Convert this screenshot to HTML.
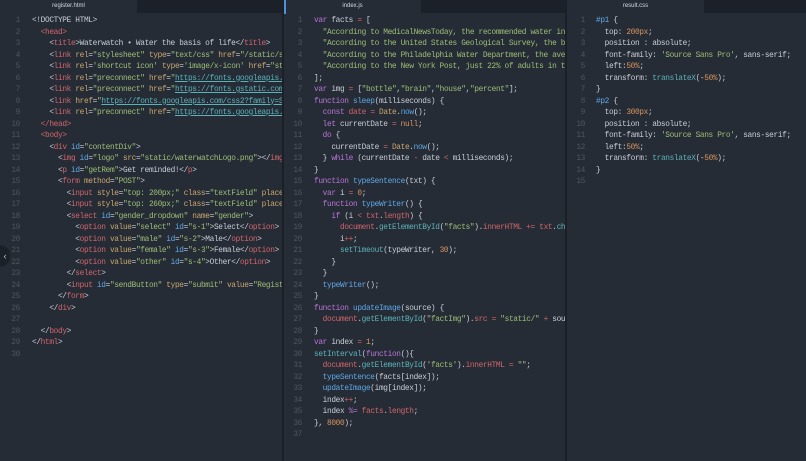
<!DOCTYPE html>
<html><head><style>
html,body{margin:0;padding:0;width:806px;height:461px;overflow:hidden;background:#262c36;}
.pane{position:absolute;top:0;height:461px;background:#262c36;overflow:hidden;}
.tabbar{position:absolute;top:0;left:0;right:0;height:13px;background:#1c2129;}
.tab{position:absolute;top:0;left:0;height:13px;width:137px;background:#262c36;color:#d5d9e0;font:6px "Liberation Sans",sans-serif;text-align:center;line-height:13px;}
.code{position:absolute;top:16px;left:0;right:0;font-family:"Liberation Mono",monospace;font-size:7.8px;letter-spacing:-0.35px;color:#c8cdd5;white-space:normal;}
.ln{display:block;height:11.5px;line-height:11.5px;position:relative;}
.n{position:absolute;left:0;width:21px;text-align:right;color:#4e5561;white-space:pre;}
.t{position:absolute;white-space:pre;}
.r{color:#d0656a}.a{color:#c9a66b}.s{color:#9cbe76}.k{color:#b775d6}.f{color:#5ea8e6}.o{color:#d7955e}.b{color:#5ea8e6}.c{color:#5bb3b9}.u{color:#5bb3b9;text-decoration:underline}
.sep{position:absolute;top:0;width:2px;height:461px;background:#1b2027;}
</style></head><body>

<div class="pane" style="left:0;width:283px">
<div class="tabbar"><div class="tab">register.html</div></div>
<div class="code">
<div class="ln"><span class="n" style="width:20px">1</span><span class="t" style="left:32px">&lt;!DOCTYPE HTML&gt;</span></div>
<div class="ln"><span class="n" style="width:20px">2</span><span class="t" style="left:32px">  <span class="r">&lt;head&gt;</span></span></div>
<div class="ln"><span class="n" style="width:20px">3</span><span class="t" style="left:32px">    &lt;<span class="r">title</span>&gt;Waterwatch • Water the basis of life&lt;/<span class="r">title</span>&gt;</span></div>
<div class="ln"><span class="n" style="width:20px">4</span><span class="t" style="left:32px">    &lt;<span class="r">link</span> <span class="a">rel</span>=<span class="s">"stylesheet"</span> <span class="a">type</span>=<span class="s">"text/css"</span> <span class="a">href</span>=<span class="s">"/static/st</span></span></div>
<div class="ln"><span class="n" style="width:20px">5</span><span class="t" style="left:32px">    &lt;<span class="r">link</span> <span class="a">rel</span>=<span class="s">'shortcut icon'</span> <span class="a">type</span>=<span class="s">'image/x-icon'</span> <span class="a">href</span>=<span class="s">"sta</span></span></div>
<div class="ln"><span class="n" style="width:20px">6</span><span class="t" style="left:32px">    &lt;<span class="r">link</span> <span class="a">rel</span>=<span class="s">"preconnect"</span> <span class="a">href</span>=<span class="s">"<span class="u">https://fonts.googleapis.c</span></span></span></div>
<div class="ln"><span class="n" style="width:20px">7</span><span class="t" style="left:32px">    &lt;<span class="r">link</span> <span class="a">rel</span>=<span class="s">"preconnect"</span> <span class="a">href</span>=<span class="s">"<span class="u">https://fonts.gstatic.com</span>"</span></span></div>
<div class="ln"><span class="n" style="width:20px">8</span><span class="t" style="left:32px">    &lt;<span class="r">link</span> <span class="a">href</span>=<span class="s">"<span class="u">https://fonts.googleapis.com/css2?family=So</span></span></span></div>
<div class="ln"><span class="n" style="width:20px">9</span><span class="t" style="left:32px">    &lt;<span class="r">link</span> <span class="a">rel</span>=<span class="s">"preconnect"</span> <span class="a">href</span>=<span class="s">"<span class="u">https://fonts.googleapis.c</span></span></span></div>
<div class="ln"><span class="n" style="width:20px">10</span><span class="t" style="left:32px">  <span class="r">&lt;/head&gt;</span></span></div>
<div class="ln"><span class="n" style="width:20px">11</span><span class="t" style="left:32px">  <span class="r">&lt;body&gt;</span></span></div>
<div class="ln"><span class="n" style="width:20px">12</span><span class="t" style="left:32px">    &lt;<span class="r">div</span> <span class="b">id</span>=<span class="s">"contentDiv"</span>&gt;</span></div>
<div class="ln"><span class="n" style="width:20px">13</span><span class="t" style="left:32px">      &lt;<span class="r">img</span> <span class="b">id</span>=<span class="s">"logo"</span> <span class="a">src</span>=<span class="s">"static/waterwatchLogo.png"</span>&gt;&lt;/<span class="r">img</span>&gt;</span></div>
<div class="ln"><span class="n" style="width:20px">14</span><span class="t" style="left:32px">      &lt;<span class="r">p</span> <span class="b">id</span>=<span class="s">"getRem"</span>&gt;Get reminded!&lt;/<span class="r">p</span>&gt;</span></div>
<div class="ln"><span class="n" style="width:20px">15</span><span class="t" style="left:32px">      &lt;<span class="r">form</span> <span class="a">method</span>=<span class="s">"POST"</span>&gt;</span></div>
<div class="ln"><span class="n" style="width:20px">16</span><span class="t" style="left:32px">        &lt;<span class="r">input</span> <span class="a">style</span>=<span class="s">"top: 200px;"</span> <span class="a">class</span>=<span class="s">"textField"</span> <span class="a">placeH</span></span></div>
<div class="ln"><span class="n" style="width:20px">17</span><span class="t" style="left:32px">        &lt;<span class="r">input</span> <span class="a">style</span>=<span class="s">"top: 260px;"</span> <span class="a">class</span>=<span class="s">"textField"</span> <span class="a">placeH</span></span></div>
<div class="ln"><span class="n" style="width:20px">18</span><span class="t" style="left:32px">        &lt;<span class="r">select</span> <span class="b">id</span>=<span class="s">"gender_dropdown"</span> <span class="a">name</span>=<span class="s">"gender"</span>&gt;</span></div>
<div class="ln"><span class="n" style="width:20px">19</span><span class="t" style="left:32px">          &lt;<span class="r">option</span> <span class="a">value</span>=<span class="s">"select"</span> <span class="b">id</span>=<span class="s">"s-1"</span>&gt;Select&lt;/<span class="r">option</span>&gt;</span></div>
<div class="ln"><span class="n" style="width:20px">20</span><span class="t" style="left:32px">          &lt;<span class="r">option</span> <span class="a">value</span>=<span class="s">"male"</span> <span class="b">id</span>=<span class="s">"s-2"</span>&gt;Male&lt;/<span class="r">option</span>&gt;</span></div>
<div class="ln"><span class="n" style="width:20px">21</span><span class="t" style="left:32px">          &lt;<span class="r">option</span> <span class="a">value</span>=<span class="s">"female"</span> <span class="b">id</span>=<span class="s">"s-3"</span>&gt;Female&lt;/<span class="r">option</span>&gt;</span></div>
<div class="ln"><span class="n" style="width:20px">22</span><span class="t" style="left:32px">          &lt;<span class="r">option</span> <span class="a">value</span>=<span class="s">"other"</span> <span class="b">id</span>=<span class="s">"s-4"</span>&gt;Other&lt;/<span class="r">option</span>&gt;</span></div>
<div class="ln"><span class="n" style="width:20px">23</span><span class="t" style="left:32px">        &lt;/<span class="r">select</span>&gt;</span></div>
<div class="ln"><span class="n" style="width:20px">24</span><span class="t" style="left:32px">        &lt;<span class="r">input</span> <span class="b">id</span>=<span class="s">"sendButton"</span> <span class="a">type</span>=<span class="s">"submit"</span> <span class="a">value</span>=<span class="s">"Registe</span></span></div>
<div class="ln"><span class="n" style="width:20px">25</span><span class="t" style="left:32px">      &lt;/<span class="r">form</span>&gt;</span></div>
<div class="ln"><span class="n" style="width:20px">26</span><span class="t" style="left:32px">    &lt;/<span class="r">div</span>&gt;</span></div>
<div class="ln"><span class="n" style="width:20px">27</span></div>
<div class="ln"><span class="n" style="width:20px">28</span><span class="t" style="left:32px">  &lt;/<span class="r">body</span>&gt;</span></div>
<div class="ln"><span class="n" style="width:20px">29</span><span class="t" style="left:32px">&lt;/<span class="r">html</span>&gt;</span></div>
<div class="ln"><span class="n" style="width:20px">30</span></div>
</div>
<div style="position:absolute;left:0;top:245px;width:10px;height:22px;background:#1c2129;border-radius:0 11px 11px 0;color:#c3c8d0;font:9px 'Liberation Sans',sans-serif;line-height:22px;text-align:center">‹</div>
</div>
<div class="sep" style="left:282px"></div>

<div class="pane" style="left:284px;width:281px">
<div class="tabbar"><div class="tab">index.js</div></div>
<div style="position:absolute;left:0;top:0;width:2px;height:14px;background:#4d8fe0"></div>
<div class="code">
<div class="ln"><span class="n" style="width:18px">1</span><span class="t" style="left:30px"><span class="k">var</span> facts <span class="r">=</span> [</span></div>
<div class="ln"><span class="n" style="width:18px">2</span><span class="t" style="left:30px">  <span class="s">"According to MedicalNewsToday, the recommended water int</span></span></div>
<div class="ln"><span class="n" style="width:18px">3</span><span class="t" style="left:30px">  <span class="s">"According to the United States Geological Survey, the br</span></span></div>
<div class="ln"><span class="n" style="width:18px">4</span><span class="t" style="left:30px">  <span class="s">"According to the Philadelphia Water Department, the aver</span></span></div>
<div class="ln"><span class="n" style="width:18px">5</span><span class="t" style="left:30px">  <span class="s">"According to the New York Post, just 22% of adults in th</span></span></div>
<div class="ln"><span class="n" style="width:18px">6</span><span class="t" style="left:30px">];</span></div>
<div class="ln"><span class="n" style="width:18px">7</span><span class="t" style="left:30px"><span class="k">var</span> img <span class="r">=</span> [<span class="s">"bottle"</span>,<span class="s">"brain"</span>,<span class="s">"house"</span>,<span class="s">"percent"</span>];</span></div>
<div class="ln"><span class="n" style="width:18px">8</span><span class="t" style="left:30px"><span class="k">function</span> <span class="f">sleep</span>(milliseconds) {</span></div>
<div class="ln"><span class="n" style="width:18px">9</span><span class="t" style="left:30px">  <span class="k">const</span> <span class="r">date</span> <span class="r">=</span> <span class="a">Date</span>.<span class="f">now</span>();</span></div>
<div class="ln"><span class="n" style="width:18px">10</span><span class="t" style="left:30px">  <span class="k">let</span> currentDate <span class="r">=</span> <span class="o">null</span>;</span></div>
<div class="ln"><span class="n" style="width:18px">11</span><span class="t" style="left:30px">  <span class="k">do</span> {</span></div>
<div class="ln"><span class="n" style="width:18px">12</span><span class="t" style="left:30px">    currentDate <span class="r">=</span> <span class="a">Date</span>.<span class="f">now</span>();</span></div>
<div class="ln"><span class="n" style="width:18px">13</span><span class="t" style="left:30px">  } <span class="k">while</span> (currentDate <span class="r">-</span> date <span class="r">&lt;</span> milliseconds);</span></div>
<div class="ln"><span class="n" style="width:18px">14</span><span class="t" style="left:30px">}</span></div>
<div class="ln"><span class="n" style="width:18px">15</span><span class="t" style="left:30px"><span class="k">function</span> <span class="f">typeSentence</span>(txt) {</span></div>
<div class="ln"><span class="n" style="width:18px">16</span><span class="t" style="left:30px">  <span class="k">var</span> i <span class="r">=</span> <span class="o">0</span>;</span></div>
<div class="ln"><span class="n" style="width:18px">17</span><span class="t" style="left:30px">  <span class="k">function</span> <span class="f">typeWriter</span>() {</span></div>
<div class="ln"><span class="n" style="width:18px">18</span><span class="t" style="left:30px">    <span class="k">if</span> (i <span class="r">&lt;</span> <span class="r">txt</span>.<span class="r">length</span>) {</span></div>
<div class="ln"><span class="n" style="width:18px">19</span><span class="t" style="left:30px">      <span class="r">document</span>.<span class="c">getElementById</span>(<span class="s">"facts"</span>).<span class="r">innerHTML</span> <span class="r">+=</span> <span class="r">txt</span>.<span class="c">cha</span></span></div>
<div class="ln"><span class="n" style="width:18px">20</span><span class="t" style="left:30px">      i<span class="r">++</span>;</span></div>
<div class="ln"><span class="n" style="width:18px">21</span><span class="t" style="left:30px">      <span class="c">setTimeout</span>(typeWriter, <span class="o">30</span>);</span></div>
<div class="ln"><span class="n" style="width:18px">22</span><span class="t" style="left:30px">    }</span></div>
<div class="ln"><span class="n" style="width:18px">23</span><span class="t" style="left:30px">  }</span></div>
<div class="ln"><span class="n" style="width:18px">24</span><span class="t" style="left:30px">  <span class="f">typeWriter</span>();</span></div>
<div class="ln"><span class="n" style="width:18px">25</span><span class="t" style="left:30px">}</span></div>
<div class="ln"><span class="n" style="width:18px">26</span><span class="t" style="left:30px"><span class="k">function</span> <span class="f">updateImage</span>(source) {</span></div>
<div class="ln"><span class="n" style="width:18px">27</span><span class="t" style="left:30px">  <span class="r">document</span>.<span class="c">getElementById</span>(<span class="s">"factImg"</span>).<span class="r">src</span> <span class="r">=</span> <span class="s">"static/"</span> <span class="r">+</span> sour</span></div>
<div class="ln"><span class="n" style="width:18px">28</span><span class="t" style="left:30px">}</span></div>
<div class="ln"><span class="n" style="width:18px">29</span><span class="t" style="left:30px"><span class="k">var</span> index <span class="r">=</span> <span class="o">1</span>;</span></div>
<div class="ln"><span class="n" style="width:18px">30</span><span class="t" style="left:30px"><span class="c">setInterval</span>(<span class="k">function</span>(){</span></div>
<div class="ln"><span class="n" style="width:18px">31</span><span class="t" style="left:30px">  <span class="r">document</span>.<span class="c">getElementById</span>(<span class="s">'facts'</span>).<span class="r">innerHTML</span> <span class="r">=</span> <span class="s">""</span>;</span></div>
<div class="ln"><span class="n" style="width:18px">32</span><span class="t" style="left:30px">  <span class="f">typeSentence</span>(facts[index]);</span></div>
<div class="ln"><span class="n" style="width:18px">33</span><span class="t" style="left:30px">  <span class="f">updateImage</span>(img[index]);</span></div>
<div class="ln"><span class="n" style="width:18px">34</span><span class="t" style="left:30px">  index<span class="r">++</span>;</span></div>
<div class="ln"><span class="n" style="width:18px">35</span><span class="t" style="left:30px">  index <span class="k">%=</span> <span class="r">facts</span>.<span class="r">length</span>;</span></div>
<div class="ln"><span class="n" style="width:18px">36</span><span class="t" style="left:30px">}, <span class="o">8000</span>);</span></div>
<div class="ln"><span class="n" style="width:18px">37</span></div>
</div>
</div>
<div class="sep" style="left:565px"></div>

<div class="pane" style="left:567px;width:239px">
<div class="tabbar"><div class="tab">result.css</div></div>
<div class="code">
<div class="ln"><span class="n" style="width:18px">1</span><span class="t" style="left:29px"><span class="b">#p1</span> {</span></div>
<div class="ln"><span class="n" style="width:18px">2</span><span class="t" style="left:29px">  top: <span class="o">200px</span>;</span></div>
<div class="ln"><span class="n" style="width:18px">3</span><span class="t" style="left:29px">  position : absolute;</span></div>
<div class="ln"><span class="n" style="width:18px">4</span><span class="t" style="left:29px">  font-family: <span class="s">'Source Sans Pro'</span>, sans-serif;</span></div>
<div class="ln"><span class="n" style="width:18px">5</span><span class="t" style="left:29px">  left:<span class="o">50%</span>;</span></div>
<div class="ln"><span class="n" style="width:18px">6</span><span class="t" style="left:29px">  transform: <span class="c">translateX</span>(-<span class="o">50%</span>);</span></div>
<div class="ln"><span class="n" style="width:18px">7</span><span class="t" style="left:29px">}</span></div>
<div class="ln"><span class="n" style="width:18px">8</span><span class="t" style="left:29px"><span class="b">#p2</span> {</span></div>
<div class="ln"><span class="n" style="width:18px">9</span><span class="t" style="left:29px">  top: <span class="o">300px</span>;</span></div>
<div class="ln"><span class="n" style="width:18px">10</span><span class="t" style="left:29px">  position : absolute;</span></div>
<div class="ln"><span class="n" style="width:18px">11</span><span class="t" style="left:29px">  font-family: <span class="s">'Source Sans Pro'</span>, sans-serif;</span></div>
<div class="ln"><span class="n" style="width:18px">12</span><span class="t" style="left:29px">  left:<span class="o">50%</span>;</span></div>
<div class="ln"><span class="n" style="width:18px">13</span><span class="t" style="left:29px">  transform: <span class="c">translateX</span>(-<span class="o">50%</span>);</span></div>
<div class="ln"><span class="n" style="width:18px">14</span><span class="t" style="left:29px">}</span></div>
<div class="ln"><span class="n" style="width:18px">15</span></div>
</div>
</div>
</body></html>
